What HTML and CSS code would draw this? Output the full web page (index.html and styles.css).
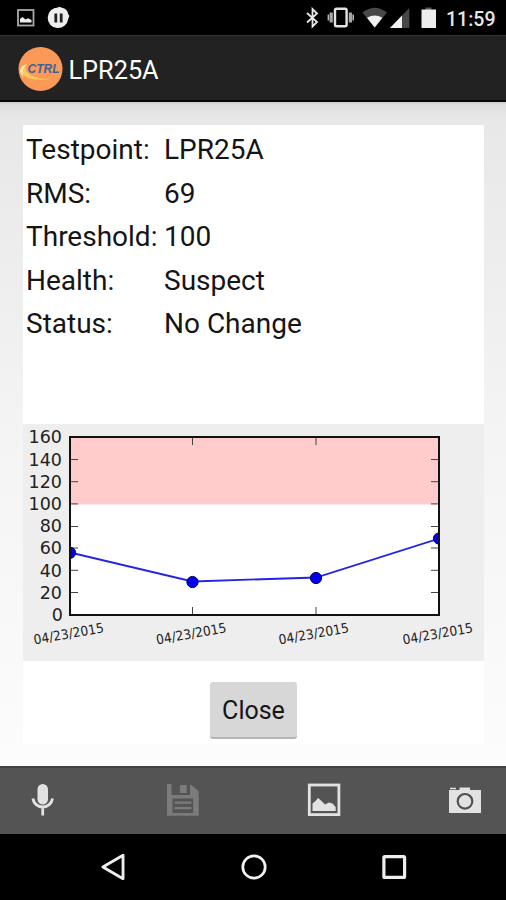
FILE: index.html
```
<!DOCTYPE html>
<html lang="en">
  <head>
    <title>LPR25A</title>
    <meta charset="utf-8" />
    <link rel="stylesheet" href="styles.css">
  </head>
  <body>
    <div id="statusbar">
      <svg class="s-image" width="18" height="18" viewBox="0 0 18 18">
        <rect x="1" y="1" width="15.5" height="15.5" fill="none" stroke="#a8a8a8" stroke-width="1.8"/>
        <path d="M3 13.5V10l2.5-2 3 2.5 2.5-1.2 3.5 1.7v2.5z" fill="#eee"/>
      </svg>
      <svg class="s-pause" width="24" height="24" viewBox="0 0 24 24">
        <path d="M12 .8l3 1 3 1 2.2 2.2 1 3 1.2 2-1.2 3A10.3 10.3 0 1 1 11 1.5z" fill="#eee"/>
        <path d="M7.4 7.5h2.8v9H7.4zM12.8 7.5h2.8v9h-2.8z" fill="#222"/>
      </svg>
      <span class="spacer"></span>
      <svg class="s-bt" width="13" height="22" viewBox="0 0 13 22">
        <path d="M1 6l10 9-4.5 4.5V2L11 6.5 1 15.5" fill="none" stroke="#e8e8e8" stroke-width="1.8"/>
      </svg>
      <svg class="s-vib" width="28" height="22" viewBox="0 0 28 22">
        <rect x="8" y="1.7" width="11.6" height="17.6" rx="1.5" fill="none" stroke="#e4e4e4" stroke-width="2.4"/>
        <path d="M4.2 5.5v10M23.4 5.5v10" stroke="#a5a5a5" stroke-width="3.2"/>
        <path d="M1.4 7.5v6M26.2 7.5v6" stroke="#b5b5b5" stroke-width="1.6"/>
      </svg>
      <svg class="s-wifi" width="26" height="22" viewBox="0 0 26 22">
        <path d="M.5 5.5Q12.700-4 25 5.500L12.700 20.500z" fill="#484848"/>
        <path d="M5 10.700Q12.700 6.300 20.400 10.700L12.700 20.500z" fill="#f2f2f2"/>
      </svg>
      <svg class="s-cell" width="20" height="22" viewBox="0 0 20 22">
        <path d="M0 21L19.300 1v20z" fill="#484848"/>
        <path d="M0 21L12 8.500V21z" fill="#f2f2f2"/>
      </svg>
      <svg class="s-batt" width="16" height="22" viewBox="0 0 16 22">
        <path d="M4.500 .5h6v2.500h-6z" fill="#555"/>
        <path d="M.5 2.500h14.500v18.500H.5z" fill="#eee"/>
      </svg>
      <span class="clock">11:59</span>
    </div>

    <div id="titlebar">
      <svg width="50" height="46" viewBox="0 0 50 46">
        <circle cx="23.500" cy="23" r="22" fill="#fb9a57"/>
        <path d="M10 18C-1 24 5 38 36 32.500 22 34 4 29 10 18z" fill="#fdc75a"/>
        <path d="M10 18C2 20 1 27 7 31 5 27 5 22 10 18z" fill="#ffe7b0"/>
        <text x="10.500" y="26.500" textLength="32" lengthAdjust="spacingAndGlyphs" class="logo">CTRL</text>
      </svg>
      <span class="title">LPR25A</span>
    </div>

    <div id="content">
      <div class="card">
        <table class="facts">
          <tr><td class="name">Testpoint:</td><td>LPR25A</td></tr>
          <tr><td class="name">RMS:</td><td>69</td></tr>
          <tr><td class="name">Threshold:</td><td>100</td></tr>
          <tr><td class="name">Health:</td><td>Suspect</td></tr>
          <tr><td class="name">Status:</td><td>No Change</td></tr>
        </table>

        <svg class="chart" width="461" height="237" viewBox="0 0 461 237">
          <defs>
            <clipPath id="plot"><rect x="47" y="13" width="369" height="178"/></clipPath>
          </defs>
          <rect x="47" y="13" width="369" height="178" fill="#fff"/>
          <rect x="47" y="13" width="369" height="67.500" fill="#ffcbcb"/>
          <!-- ticks -->
          <g stroke="#444" stroke-width="1">
            <path d="M47 35.500h8M47 57.700h8M47 79.900h8M47 102.500h8M47 124h8M47 146.300h8M47 168.500h8"/>
            <path d="M416 35.500h-8M416 57.700h-8M416 79.900h-8M416 102.500h-8M416 124h-8M416 146.300h-8M416 168.500h-8"/>
            <path d="M169.500 13v8M293 13v8M169.500 191v-8M293 191v-8"/>
          </g>
          <g clip-path="url(#plot)">
            <polyline points="47,128.500 169.500,157.500 293,153.500 416,114.500" fill="none" stroke="#2424e4" stroke-width="1.800"/>
            <g fill="#0000f0" stroke="#00005a" stroke-width="1">
              <circle cx="47" cy="128.800" r="5.600"/>
              <circle cx="169.500" cy="158" r="5.600"/>
              <circle cx="293" cy="154" r="5.600"/>
              <circle cx="416" cy="114.500" r="5.600"/>
            </g>
          </g>
          <rect x="47" y="13" width="369" height="178" fill="none" stroke="#111" stroke-width="2"/>
          <g class="ylabel">
            <text x="39" y="19.300">160</text>
            <text x="39" y="41.600">140</text>
            <text x="39" y="63.800">120</text>
            <text x="39" y="86">100</text>
            <text x="39" y="108.200">80</text>
            <text x="39" y="130.300">60</text>
            <text x="39" y="152.500">40</text>
            <text x="39" y="174.700">20</text>
            <text x="40" y="196.900">0</text>
          </g>
          <g class="xlabel">
            <text transform="translate(11.500 220.500) rotate(-10)" textLength="71" lengthAdjust="spacingAndGlyphs">04/23/2015</text>
            <text transform="translate(134 220.500) rotate(-10)" textLength="71" lengthAdjust="spacingAndGlyphs">04/23/2015</text>
            <text transform="translate(256.500 220.500) rotate(-10)" textLength="71" lengthAdjust="spacingAndGlyphs">04/23/2015</text>
            <text transform="translate(380.500 220.500) rotate(-10)" textLength="71" lengthAdjust="spacingAndGlyphs">04/23/2015</text>
          </g>
        </svg>

        <button class="close">Close</button>
      </div>
    </div>

    <div id="actions">
      <svg width="34" height="34" viewBox="0 0 34 34">
        <rect x="12.500" y="1" width="10.500" height="20.500" rx="5.200" fill="#e2e2e2"/>
        <path d="M7.900 15.500a9.900 9.900 0 0 0 19.600 0M17.700 25v7.500" fill="none" stroke="#e2e2e2" stroke-width="2.800"/>
      </svg>
      <svg width="34" height="34" viewBox="0 0 34 34">
        <path fill="#7b7b7b" fill-rule="evenodd" d="M1 1h4.500v11H24V1l8.700 7v24.700H1zM6.500 15.500v14.500h20.700V15.500z"/>
        <path fill="#7b7b7b" d="M14 2h6.700v8H14zM8.500 18.500h17v2.300h-17zM8.500 24h17v2.300h-17z"/>
      </svg>
      <svg width="34" height="34" viewBox="0 0 34 34">
        <rect x="2.300" y="2" width="29.600" height="29.600" fill="none" stroke="#e2e2e2" stroke-width="2.800"/>
        <path fill="#e2e2e2" d="M5.500 28v-7.500l2.500-2 3-3.500 3 2.500 4 4 4-2 3.500 1 3.200 3.500v4z"/>
      </svg>
      <svg width="34" height="34" viewBox="0 0 34 34">
        <path fill="#e2e2e2" d="M1 7h10.500V4.500h10.500V7h11v23H1zM2 4.800h6v1.500H2z"/>
        <circle cx="17" cy="18.300" r="7.300" fill="none" stroke="#505050" stroke-width="2.200"/>
      </svg>
    </div>

    <div id="navbar">
      <svg width="28" height="28" viewBox="0 0 28 28">
        <path d="M3 14L24 1.800v24.400z" transform="translate(1 .5) scale(.96)" fill="none" stroke="#eee" stroke-width="3" stroke-linejoin="round"/>
      </svg>
      <svg width="28" height="28" viewBox="0 0 28 28">
        <circle cx="14" cy="14" r="11.200" fill="none" stroke="#f2f2f2" stroke-width="2.700"/>
      </svg>
      <svg width="28" height="28" viewBox="0 0 28 28">
        <rect x="3.900" y="3.700" width="20.700" height="20.700" rx="1" fill="none" stroke="#eee" stroke-width="3.200"/>
      </svg>
    </div>
  </body>
</html>
```
FILE: styles.css
```
body {
    margin: 0;
    width: 506px;
    height: 900px;
    display: flex;
    flex-direction: column;
    overflow: hidden;
    background: #000;
    font-family: Roboto, sans-serif; }

svg {
    display: block;
    flex: none; }

div#statusbar {
    box-sizing: border-box;
    height: 35px;
    padding: 1px 11px 0 17px;
    display: flex;
    align-items: center;
    background: #000; }

.s-pause {
    margin-left: 12px; }
.spacer {
    flex: 1; }
.s-vib {
    margin-left: 8px; }
.s-wifi {
    margin-left: 7px; }
.s-cell {
    margin-left: 2px; }
.s-batt {
    margin-left: 11px; }

.clock {
    margin-left: 9px;
    width: 49px;
    padding-top: 3px;
    font-size: 19.500px;
    font-weight: 500;
    line-height: 22px;
    color: #e6e6e6; }

div#titlebar {
    box-sizing: border-box;
    height: 67px;
    padding: 2px 0 0 17px;
    display: flex;
    align-items: center;
    background: #222;
    border-top: 1px solid #333;
    border-bottom: 2px solid #080808; }

.title {
    margin-left: 1.500px;
    padding-top: 3px;
    font-size: 25.300px;
    color: #fff; }

.logo {
    font: italic bold 13.500px "Liberation Sans", sans-serif;
    fill: #3f6298; }

div#content {
    box-sizing: border-box;
    height: 664px;
    padding: 23px 22px 0 23px;
    background: linear-gradient(#cfcfcf, #e0e0e0 3px, #e8e8e8 18px, #f4f4f4 50%, #fcfcfc); }

.card {
    box-sizing: border-box;
    height: 619px;
    padding-top: 4px;
    background: #fff; }

table.facts {
    border-collapse: collapse;
    height: 218px;
    font-size: 28px;
    line-height: 33px;
    color: #151515; }

.facts td {
    padding: 4px 0 6.600px 3px; }
.facts td.name {
    width: 135px; }

.chart {
    margin-top: 77px;
    background: #eee; }

.ylabel {
    font: 17.500px "DejaVu Sans", sans-serif;
    text-anchor: end;
    fill: #222; }

.xlabel {
    font: 13.500px "DejaVu Sans", sans-serif;
    fill: #222; }

.close {
    display: block;
    width: 87px;
    height: 57px;
    margin: 21px auto 0;
    padding: 2px 0 0;
    border: none;
    border-bottom: 2px solid #b5b5b5;
    border-radius: 3px;
    background: #d7d7d7;
    font: 25px Roboto, sans-serif;
    color: #151515; }

div#actions {
    box-sizing: border-box;
    height: 68px;
    padding: 0 24px 3px 25px;
    display: flex;
    justify-content: space-between;
    align-items: center;
    background: #545454;
    border-top: 2px solid #444; }

div#navbar {
    height: 66px;
    padding: 0 98px 0 99px;
    display: flex;
    justify-content: space-between;
    align-items: center;
    background: #000; }
```
